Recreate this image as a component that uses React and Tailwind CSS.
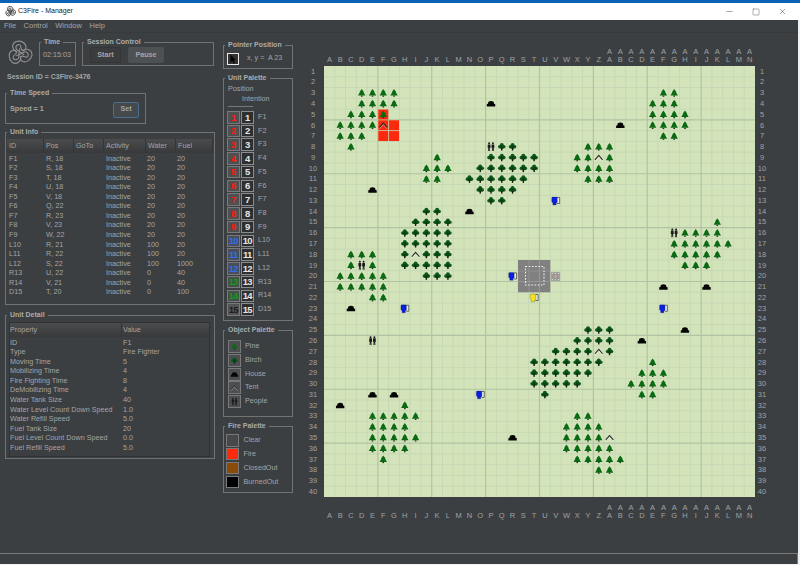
import React from "react";
import { Minus, Square, X } from "lucide-react";

const S = 431 / 40;
const range = (a, b) => Array.from({ length: b - a + 1 }, (_, i) => a + i);
const pines = {
  3: [3, 4, 5, 6, 31, 32], 4: [3, 4, 5, 6, 30, 31, 32], 5: [2, 3, 4, 5, 30, 31, 32, 33], 6: [1, 2, 3, 4, 30, 31, 32, 33],
  7: [1, 2, 3, 31, 32], 8: [2, 24, 25, 26], 9: [10, 23, 24, 26], 10: [9, 10, 11, 23, 24, 25, 26], 11: [9, 10, 24, 25, 26],
  15: [36], 16: [33, 34, 35, 36], 17: range(32, 37), 18: [2, 3, 4, 32, 33, 34, 35, 36], 19: [2, 4, 33, 34, 35],
  20: range(1, 5), 21: range(1, 5), 22: [4, 5], 28: [30], 29: [29, 30, 31], 30: [28, 29, 30, 31], 31: [29, 30], 32: [7],
  33: [4, 5, 6, 7, 8, 23, 24], 34: [4, 5, 6, 7, 22, 23, 24, 25], 35: [4, 5, 6, 7, 8, 22, 23, 24, 25],
  36: [4, 5, 6, 7, 22, 23, 24, 25, 26], 37: [5, 23, 24, 25, 26, 27], 38: [25, 26],
};
const birches = {
  8: [16, 17], 9: range(15, 19), 10: range(14, 19), 11: range(13, 18), 12: range(14, 17), 13: [15, 16], 14: [9, 10],
  15: range(8, 11), 16: range(7, 11), 17: range(7, 11), 18: [7, 9, 10, 11], 19: range(7, 11), 20: [9, 10, 11],
  25: [24, 25, 26], 26: [23, 24, 25, 26], 27: [21, 22, 23, 24, 26], 28: range(19, 25), 29: range(19, 24), 30: range(19, 23), 31: [20],
};
const houses = [[15, 4], [27, 6], [4, 12], [13, 14], [31, 21], [35, 21], [2, 23], [33, 25], [29, 26], [4, 31], [6, 31], [1, 32], [17, 35]];
const tents = [[5, 6], [25, 9], [8, 18], [25, 27], [26, 35]];
const people = [[15, 8], [32, 16], [3, 19], [4, 26]];
const blues = [[21, 13], [17, 20], [7, 23], [31, 23], [14, 31]];

const Pine = ({ x = 0, y = 0 }) => (
  <g transform={`translate(${x} ${y})`}>
    <path d="M0 -3.9 L2.3 -0.8 L1.8 -0.8 L3.7 2.6 L-3.7 2.6 L-1.8 -0.8 L-2.3 -0.8 Z" fill="#0a6a14" />
    <rect x="-0.8" y="2.6" width="1.6" height="1.2" fill="#1f2f1e" />
  </g>
);
const Birch = ({ x = 0, y = 0 }) => (
  <g transform={`translate(${x} ${y})`}>
    <circle cx="0" cy="-1.8" r="2" fill="#0c5a1c" />
    <circle cx="-2" cy="0" r="1.8" fill="#0c5a1c" />
    <circle cx="2" cy="0" r="1.8" fill="#0c5a1c" />
    <circle cx="0" cy="0.2" r="1.9" fill="#0a4216" />
    <rect x="-0.7" y="1.2" width="1.4" height="2.5" fill="#101a10" />
  </g>
);
const House = ({ x = 0, y = 0 }) => (
  <g transform={`translate(${x} ${y})`}>
    <path d="M-4.2 2.8 L-4.2 0.4 L-3 0 L-2.6 -2 Q0 -3.4 2.6 -2 L3 0 L4.2 0.4 L4.2 2.8 Z" fill="#050505" />
  </g>
);
const Tent = ({ x = 0, y = 0 }) => (
  <g transform={`translate(${x} ${y})`}>
    <path d="M-3.8 2.6 L0 -1.8 L3.8 2.6" fill="none" stroke="#ffffff" strokeOpacity="0.45" strokeWidth="1" transform="translate(0 1)" />
    <path d="M-3.8 2.2 L0 -2.2 L3.8 2.2" fill="none" stroke="#2b2b2b" strokeWidth="1.1" />
  </g>
);
const Person = ({ x }) => (
  <g transform={`translate(${x} 0)`} fill="#1b1b1b">
    <circle cx="0" cy="-3.5" r="1" />
    <path d="M-1.3 -2.4 L1.3 -2.4 L1.5 1 L0.8 1 L1 4.3 L0.2 4.3 L0 1.4 L-0.2 4.3 L-1 4.3 L-0.8 1 L-1.5 1 Z" />
  </g>
);
const People = ({ x = 0, y = 0 }) => (
  <g transform={`translate(${x} ${y})`}>
    <Person x={-1.9} />
    <Person x={1.9} />
  </g>
);
const Unit = ({ x, y, color }) => (
  <g transform={`translate(${x} ${y})`}>
    <path d="M1.4 -3.2 L4 -3.2 L4 2.8 L1.4 2.8" fill="#e9ecdf" stroke="#33352f" strokeWidth="0.7" />
    <path d="M-3.9 -2.9 Q-3.9 -3.6 -3 -3.6 L0.8 -3.6 Q1.6 -3.6 1.6 -2.8 L1.6 1.8 L0.5 2.4 L0.5 4.2 L-2.8 4.2 L-2.8 2.4 L-3.9 1.2 Z" fill={color} stroke="#171c34" strokeOpacity="0.6" strokeWidth="0.4" />
  </g>
);
const cx = (c) => (c + 0.5) * S;
const cy = (r) => (r - 0.5) * S;

function MapCanvas() {
  const lines = range(0, 40);
  return (
    <svg width="431" height="431" viewBox="0 0 431 431" className="block bg-[#d3e4ba]">
      {lines.filter((i) => i % 5 !== 0).map((i) => (
        <g key={i} stroke="#c8d8b6" strokeWidth="1">
          <line x1={i * S} x2={i * S} y1="0" y2="431" />
          <line y1={i * S} y2={i * S} x1="0" x2="431" />
        </g>
      ))}
      {lines.filter((i) => i % 5 === 0 && i > 0 && i < 40).map((i) => (
        <g key={i} stroke="#b1c3a3" strokeWidth="1.2">
          <line x1={i * S} x2={i * S} y1="0" y2="431" />
          <line y1={i * S} y2={i * S} x1="0" x2="431" />
        </g>
      ))}
      {[[5, 5], [5, 6], [6, 6], [5, 7], [6, 7]].map(([c, r]) => (
        <rect key={`${c}-${r}`} x={c * S + 0.4} y={(r - 1) * S + 0.4} width={S - 0.8} height={S - 0.8} fill="#fb2a0c" />
      ))}
      <rect x="194" y="194" width="32.3" height="32.3" fill="#808080" />
      <line x1="215.5" x2="215.5" y1="194" y2="226" stroke="#979797" />
      <line x1="205" x2="205" y1="194" y2="226" stroke="#8f8f8f" />
      <line x1="194" x2="226" y1="215.5" y2="215.5" stroke="#979797" />
      <line x1="194" x2="226" y1="205" y2="205" stroke="#8f8f8f" />
      <rect x="201.5" y="200.5" width="18.5" height="18.5" fill="none" stroke="#efefef" strokeWidth="1.1" strokeDasharray="1.6 1.6" />
      <rect x="227" y="206" width="9" height="9" fill="#9a9a94" stroke="#b9b9b4" strokeWidth="0.6" />
      <rect x="230.5" y="209.5" width="2" height="2" fill="#e8a0a0" />
      <g fill="#d8d8d4">
        <rect x="228" y="207" width="1" height="1" /><rect x="231" y="207" width="1" height="1" /><rect x="234" y="207" width="1" height="1" />
        <rect x="228" y="213" width="1" height="1" /><rect x="231" y="213" width="1" height="1" /><rect x="234" y="213" width="1" height="1" />
      </g>
      {Object.entries(pines).flatMap(([r, cs]) => cs.map((c) => <Pine key={`p${c}-${r}`} x={cx(c)} y={cy(+r)} />))}
      {Object.entries(birches).flatMap(([r, cs]) => cs.map((c) => <Birch key={`b${c}-${r}`} x={cx(c)} y={cy(+r)} />))}
      {houses.map(([c, r]) => <House key={`h${c}-${r}`} x={cx(c)} y={cy(r)} />)}
      {tents.map(([c, r]) => <Tent key={`t${c}-${r}`} x={cx(c)} y={cy(r)} />)}
      {people.map(([c, r]) => <People key={`q${c}-${r}`} x={cx(c)} y={cy(r)} />)}
      {blues.map(([c, r]) => <Unit key={`u${c}-${r}`} x={cx(c)} y={cy(r)} color="#0a1fe0" />)}
      <Unit x={cx(19)} y={cy(22)} color="#f5e21a" />
    </svg>
  );
}

const Logo = ({ size, color, sw }) => (
  <svg width={size} height={size} viewBox="-13 -13 26 26" fill="none" stroke={color} strokeWidth={sw}>
    {[0, 120, 240].map((a) => (
      <g key={a} transform={`rotate(${a})`}>
        <path d="M-3 -1 C-8 -3 -9 -9 -4 -11.5 C1 -13 6 -10 6 -6 C6 -3 3 -2 2 -3 C0 -5 2 -8 -1 -8.5 C-4 -8.5 -5 -5 -3 -3 C0 -1 3 0 4 2" />
      </g>
    ))}
  </svg>
);

const Panel = ({ title, className, children }) => (
  <div className={`relative border border-[#707274] ${className}`}>
    <span className="absolute left-[1px] top-[-6px] whitespace-nowrap bg-[#3c3f41] px-[3px] text-[7px] font-bold leading-[10px] text-[#a9abad]">{title}</span>
    {children}
  </div>
);

const infoRows = [
  ["F1", "R, 18", "20", "20"], ["F2", "S, 18", "20", "20"], ["F3", "T, 18", "20", "20"], ["F4", "U, 18", "20", "20"],
  ["F5", "V, 18", "20", "20"], ["F6", "Q, 22", "20", "20"], ["F7", "R, 23", "20", "20"], ["F8", "V, 23", "20", "20"],
  ["F9", "W, 22", "20", "20"], ["L10", "R, 21", "100", "20"], ["L11", "R, 22", "100", "20"], ["L12", "S, 22", "100", "1000"],
  ["R13", "U, 22", "0", "40"], ["R14", "V, 21", "0", "40"], ["D15", "T, 20", "0", "100"],
];
const detailRows = [
  ["ID", "F1"], ["Type", "Fire Fighter"], ["Moving Time", "5"], ["Mobilizing Time", "4"], ["Fire Fighting Time", "8"],
  ["DeMobilizing Time", "4"], ["Water Tank Size", "40"], ["Water Level Count Down Speed", "1.0"], ["Water Refill Speed", "5.0"],
  ["Fuel Tank Size", "20"], ["Fuel Level Count Down Speed", "0.0"], ["Fuel Refill Speed", "5.0"],
];
const units = [
  ["1", "F1", "text-[#ff1a08]", "bg-[#505052]"], ["2", "F2", "text-[#ff1a08]", "bg-[#505052]"], ["3", "F3", "text-[#ff1a08]", "bg-[#505052]"],
  ["4", "F4", "text-[#ff1a08]", "bg-[#505052]"], ["5", "F5", "text-[#ff1a08]", "bg-[#505052]"], ["6", "F6", "text-[#ff1a08]", "bg-[#505052]"],
  ["7", "F7", "text-[#ff1a08]", "bg-[#505052]"], ["8", "F8", "text-[#ff1a08]", "bg-[#505052]"], ["9", "F9", "text-[#ff1a08]", "bg-[#505052]"],
  ["10", "L10", "text-[#2f6ff0]", "bg-[#4a4e5c]"], ["11", "L11", "text-[#2f6ff0]", "bg-[#4a4e5c]"], ["12", "L12", "text-[#2f6ff0]", "bg-[#4a4e5c]"],
  ["13", "R13", "text-[#0f9a1a]", "bg-[#46504a]"], ["14", "R14", "text-[#0f9a1a]", "bg-[#46504a]"], ["15", "D15", "text-[#1c1c1c]", "bg-[#555557]"],
];
const objects = [["Pine", Pine], ["Birch", Birch], ["House", House], ["Tent", Tent], ["People", People]];
const fires = [["Clear", "bg-[#46484a]"], ["Fire", "bg-[#fb2a0c]"], ["ClosedOut", "bg-[#8a4a08]"], ["BurnedOut", "bg-[#020202]"]];

const letters = range(0, 39).map((i) => (i < 26 ? String.fromCharCode(65 + i) : String.fromCharCode(65 + i - 26)));

const ColLabels = () => (
  <div className="grid h-4 w-[431px] grid-cols-[repeat(40,1fr)] grid-rows-2 text-center text-[7.5px] leading-2 text-[#a0a2a4]">
    {letters.map((l, i) => <span key={`u${i}`}>{i >= 26 ? "A" : ""}</span>)}
    {letters.map((l, i) => <span key={`l${i}`}>{l}</span>)}
  </div>
);
const RowLabels = ({ className }) => (
  <div className={`grid h-[431px] grid-rows-[repeat(40,1fr)] items-center text-center text-[7.5px] leading-none text-[#a0a2a4] ${className}`}>
    {range(1, 40).map((n) => <span key={n}>{n}</span>)}
  </div>
);

export default function App() {
  return (
    <div className="flex h-[565px] w-[800px] flex-col overflow-hidden bg-[#f2f2f2] font-['Liberation_Sans',Arial,sans-serif]">
      <div className="h-[3px] bg-[#0c62b4]" />
      <div className="flex h-[17px] items-center bg-white text-[7px] text-[#222]">
        <span className="ml-[5px] mr-[2px] flex"><Logo size={11} color="#333" sw={2} /></span>
        <span>C3Fire - Manager</span>
        <div className="ml-auto flex items-center text-[#333]">
          <Minus size={9} strokeWidth={1.2} className="mr-[18px]" />
          <Square size={8} strokeWidth={1.2} className="mr-[18px]" />
          <X size={9} strokeWidth={1.2} className="mr-[13px]" />
        </div>
      </div>
      <div className="flex w-[798px] flex-1 flex-col bg-[#3c3f41]">
        <div className="flex h-[13px] items-center gap-[7.5px] border-b border-[#37393b] pl-[4px] text-[7.5px] text-[#a3a5a7]">
          <span>File</span><span>Control</span><span>Window</span><span>Help</span>
        </div>
        <div className="flex flex-1">
          <div className="w-[218px] pt-[7px] text-[7.2px] text-[#a3a5a7]">
            <div className="flex h-[26px]">
              <div className="ml-[7px]"><Logo size={26} color="#8f9193" sw={1.1} /></div>
              <Panel title="Time" className="ml-[6px] mt-[2px] flex h-[24px] w-[37px] items-center pl-[3px] pt-[2px]">
                <span>02:15:03</span>
              </Panel>
              <Panel title="Session Control" className="ml-[6px] mt-[2px] flex h-[24px] w-[132px] items-start gap-[7px] pl-[7px] pt-[4px]">
                <div className="flex h-[16px] w-[31px] items-center justify-center rounded-[2px] border border-[#333537] bg-[#3a3c3e] font-bold">Start</div>
                <div className="flex h-[16px] w-[36px] items-center justify-center rounded-[2px] bg-[#4e5153] font-bold">Pause</div>
              </Panel>
            </div>
            <div className="ml-[7px] mt-[6px] text-[7px] font-bold leading-[10px]">Session ID = C3Fire-3476</div>
            <Panel title="Time Speed" className="ml-[5px] mt-[11px] flex h-[31px] w-[141px] items-center justify-between pl-[4px] pr-[6px] pt-[2px]">
              <span className="font-bold">Speed = 1</span>
              <div className="flex h-[16px] w-[26px] items-center justify-center rounded-[2px] border border-[#4a6f94] bg-[#46494c] font-bold">Set</div>
            </Panel>
            <Panel title="Unit Info" className="ml-[5px] mt-[8px] h-[173px] w-[210px] px-[1px] pt-[6px]">
              <div className="grid h-[14px] grid-cols-[37px_30px_30px_42px_30px_1fr] items-center bg-gradient-to-b from-[#4a4c4e] to-[#37393b]">
                {["ID", "Pos", "GoTo", "Activity", "Water", "Fuel"].map((h) => (
                  <span key={h} className="flex h-full items-center border-r border-[#333537] pl-[2px]">{h}</span>
                ))}
              </div>
              <div className="mt-[0.5px]">
                {infoRows.map((r) => (
                  <div key={r[0]} className="grid h-[9.57px] grid-cols-[37px_30px_30px_42px_30px_1fr] leading-[9.57px]">
                    <span className="pl-[2px]">{r[0]}</span>
                    <span className="pl-[2px]">{r[1]}</span>
                    <span />
                    <span className="pl-[2px]">Inactive</span>
                    <span className="pl-[1px]">{r[2]}</span>
                    <span className="pl-[1px]">{r[3]}</span>
                  </div>
                ))}
              </div>
            </Panel>
            <Panel title="Unit Detail" className="ml-[5px] mt-[10px] h-[144px] w-[210px] pl-[3px] pr-[4px] pt-[6px]">
              <div className="h-[135px] border border-[#303234]">
                <div className="grid h-[14px] grid-cols-[112px_1fr] bg-gradient-to-b from-[#4a4c4e] to-[#37393b]">
                  <span className="flex items-center border-r border-[#333537]">Property</span>
                  <span className="flex items-center pl-[1px]">Value</span>
                </div>
                <div className="mt-[0.5px]">
                  {detailRows.map((r) => (
                    <div key={r[0]} className="grid h-[9.6px] grid-cols-[112px_1fr] leading-[9.6px]">
                      <span className="whitespace-nowrap">{r[0]}</span>
                      <span className="pl-[1px]">{r[1]}</span>
                    </div>
                  ))}
                </div>
              </div>
            </Panel>
          </div>

          <div className="ml-[5px] w-[70px] pt-[12px] text-[7.2px] text-[#a3a5a7]">
            <Panel title="Pointer Position" className="flex h-[24px] items-center pl-[3px] pt-[3px]">
              <div className="flex h-[12px] w-[12px] items-center justify-center border border-[#e8e8e8] bg-[#333]">
                <svg width="8" height="10" viewBox="0 0 8 10"><path d="M1.5 0.5 L1.5 8.5 L3.4 6.8 L4.6 9.5 L5.8 9 L4.7 6.4 L7 6.3 Z" fill="#050505" /></svg>
              </div>
              <span className="ml-[8px] whitespace-pre">x, y =  A 23</span>
            </Panel>
            <Panel title="Unit Palette" className="mt-[9px] h-[243px] pl-[3px] pt-[5px]">
              <div className="pl-[1px] leading-[9.5px]">Position</div>
              <div className="pl-[15px] leading-[9.5px]">Intention</div>
              <div className="mb-[4px] ml-[1px] mt-[3px] h-[1px] w-[25px] bg-[#77797b]" />
              <div className="flex flex-col gap-[1.24px]">
                {units.map(([n, label, tc, bg]) => (
                  <div key={label} className="flex items-center gap-[1.5px]">
                    <div className={`flex h-[12.5px] w-[12.5px] items-center justify-center overflow-hidden border border-[#77797b] text-[9.5px] font-bold leading-none tracking-[-0.7px] ${bg} ${tc}`}>{n}</div>
                    <div className="flex h-[12.5px] w-[12.5px] items-center justify-center overflow-hidden border border-[#8a8c8e] bg-[#2d2f31] text-[9.5px] font-bold leading-none tracking-[-0.7px] text-[#e6e6e6]">{n}</div>
                    <span className="ml-[3px]">{label}</span>
                  </div>
                ))}
              </div>
            </Panel>
            <Panel title="Object Palette" className="mt-[9px] h-[87px] pl-[4px] pt-[9px]">
              <div className="flex flex-col gap-[0.8px]">
                {objects.map(([name, Icon]) => (
                  <div key={name} className="flex items-center">
                    <svg width="13" height="13" viewBox="-6.5 -6.5 13 13" className="border border-[#77797b] bg-[#4c4e50]"><Icon /></svg>
                    <span className="ml-[4px]">{name}</span>
                  </div>
                ))}
              </div>
            </Panel>
            <Panel title="Fire Palette" className="mt-[9px] h-[67px] pl-[2px] pt-[7px]">
              <div className="flex flex-col gap-[1.4px]">
                {fires.map(([name, bg]) => (
                  <div key={name} className="flex items-center">
                    <div className={`h-[12.5px] w-[12.5px] border border-[#77797b] ${bg}`} />
                    <span className="ml-[5px]">{name}</span>
                  </div>
                ))}
              </div>
            </Panel>
          </div>

          <div className="ml-[7px] flex w-[487px] pt-[15px]">
            <RowLabels className="mt-[18px] w-[24px] pl-[2px]" />
            <div className="flex flex-col">
              <ColLabels />
              <div className="mt-[2px]"><MapCanvas /></div>
              <div className="mt-[7px]"><ColLabels /></div>
            </div>
            <RowLabels className="mt-[18px] w-[14px]" />
          </div>
        </div>
        <div className="h-[11px] border-r border-t border-[#77797b]" />
      </div>
      <div className="h-px" />
    </div>
  );
}
